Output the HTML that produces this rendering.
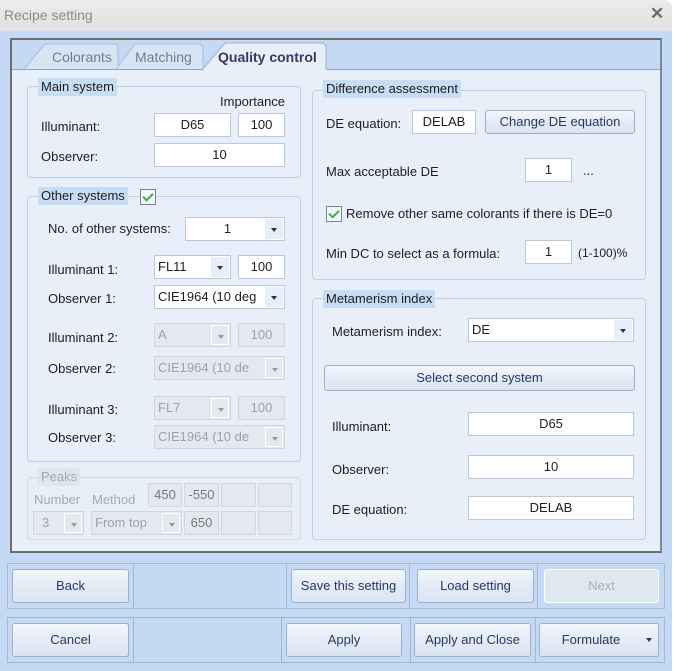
<!DOCTYPE html>
<html><head><style>
*{box-sizing:border-box;margin:0;padding:0}
body{width:675px;height:671px;overflow:hidden;background:#fff;font-family:"Liberation Sans",sans-serif;font-size:13px;color:#1e1e1e;position:relative}
.a{position:absolute}
.t{position:absolute;white-space:nowrap}
.g{position:absolute;border:1px solid #bcd0ea;border-radius:4px}
.gl{position:absolute;background:#c7dcf5;padding:0 3px;height:18px;line-height:18px;white-space:nowrap}
.in{position:absolute;background:#fff;border:1px solid #b7c9e2;text-align:center;line-height:22px;white-space:nowrap;overflow:hidden}
.cb{position:absolute;background:#fff;border:1px solid #b7c9e2;line-height:22px;padding-left:3px;white-space:nowrap;overflow:hidden}
.cb .ar{position:absolute;right:1px;top:1px;bottom:1px;width:18px;background:#e6eefa}
.cb .ar:after{content:"";position:absolute;left:6px;top:9px;border-left:3px solid transparent;border-right:3px solid transparent;border-top:4px solid #333}
.dis{background:#e4e9f0!important;color:#9aa3ad;border-color:#cfd6df}
.dis .ar{background:#e4e9f0;border:1px solid #fff}
.dis .ar:after{border-top-color:#999}
.bt{position:absolute;border:1px solid #9db0c9;border-radius:3px;background:linear-gradient(#f3f7fc,#e2eaf5 55%,#dbe5f2);color:#243a68;text-align:center;white-space:nowrap}
.cell{position:absolute;border:1px solid #a9b6c6}
.chk{position:absolute;width:16px;height:16px;border:1px solid #6f86a3;background:#f4f8fc}
.chk:after{content:"";position:absolute;left:4px;top:1px;width:4px;height:8px;border:solid #3bb03b;border-width:0 2px 2px 0;transform:rotate(45deg)}
</style></head><body>
<div class="a" style="left:0;top:0;width:672px;height:31px;background:linear-gradient(#ececec,#e1e1e1);border-radius:0 8px 0 0"></div>
<div class="t" style="left:4px;top:7px;color:#8a8a8a;font-size:14px">Recipe setting</div>
<div class="t" style="left:650px;top:4px;color:#6d6d6d;font-size:17px;font-weight:bold">✕</div>
<div class="a" style="left:0;top:31px;width:672px;height:640px;background:#c3d9f4"></div>
<div class="a" style="left:672px;top:0;width:3px;height:671px;background:#fff"></div>
<div class="a" style="left:10px;top:38px;width:652px;height:515px;border:2px solid #6d6d6d;border-right-color:#7a8a9c;background:#c3d9f4"></div>
<div class="a" style="left:12px;top:69px;width:648px;height:482px;background:#e8eff9;border-top:1px solid #8aa6cc"></div>
<!-- tabs -->
<svg class="a" style="left:20px;top:42px" width="310" height="29">
<path d="M4 27 L25 2 L96 2 L98 5 L98 27" fill="#d7e4f4" stroke="#a9bdd8"/>
<path d="M96 27 L115 2 L180 2 L183 5 L183 27" fill="#d7e4f4" stroke="#a9bdd8"/>
<path d="M182 28 L205 1 L303 1 L306 4 L306 28" fill="#e8eff9" stroke="#9ab4d6"/>
</svg>
<div class="t" style="left:52px;top:49px;color:#6c7f96;font-size:14px">Colorants</div>
<div class="t" style="left:135px;top:49px;color:#6c7f96;font-size:14px">Matching</div>
<div class="t" style="left:218px;top:49px;color:#2c3f60;font-size:14px;font-weight:bold">Quality control</div>
<!-- main system -->
<div class="g" style="left:27px;top:86px;width:274px;height:92px"></div>
<div class="gl" style="left:38px;top:78px">Main system</div>
<div class="t" style="left:220px;top:94px">Importance</div>
<div class="t" style="left:41px;top:119px">Illuminant:</div>
<div class="in" style="left:154px;top:113px;width:77px;height:24px">D65</div>
<div class="in" style="left:238px;top:113px;width:47px;height:24px">100</div>
<div class="t" style="left:41px;top:149px">Observer:</div>
<div class="in" style="left:154px;top:143px;width:131px;height:24px">10</div>
<!-- other systems -->
<div class="g" style="left:27px;top:196px;width:274px;height:266px"></div>
<div class="gl" style="left:38px;top:187px">Other systems</div>
<div class="chk" style="left:140px;top:189px"></div>
<div class="t" style="left:48px;top:221px">No. of other systems:</div>
<div class="cb" style="left:185px;top:217px;width:100px;height:24px;text-align:center;padding-right:18px">1<div class="ar"></div></div>
<div class="t" style="left:48px;top:262px">Illuminant 1:</div>
<div class="cb" style="left:154px;top:255px;width:77px;height:24px">FL11<div class="ar"></div></div>
<div class="in" style="left:238px;top:255px;width:47px;height:24px">100</div>
<div class="t" style="left:48px;top:291px">Observer 1:</div>
<div class="cb" style="left:154px;top:285px;width:131px;height:24px">CIE1964 (10 deg<div class="ar"></div></div>
<div class="t" style="left:48px;top:330px">Illuminant 2:</div>
<div class="cb dis" style="left:154px;top:323px;width:77px;height:24px">A<div class="ar"></div></div>
<div class="in dis" style="left:238px;top:323px;width:47px;height:24px">100</div>
<div class="t" style="left:48px;top:361px">Observer 2:</div>
<div class="cb dis" style="left:154px;top:356px;width:131px;height:24px">CIE1964 (10 de<div class="ar"></div></div>
<div class="t" style="left:48px;top:402px">Illuminant 3:</div>
<div class="cb dis" style="left:154px;top:396px;width:77px;height:24px">FL7<div class="ar"></div></div>
<div class="in dis" style="left:238px;top:396px;width:47px;height:24px">100</div>
<div class="t" style="left:48px;top:430px">Observer 3:</div>
<div class="cb dis" style="left:154px;top:425px;width:131px;height:24px">CIE1964 (10 de<div class="ar"></div></div>
<!-- peaks -->
<div class="g" style="left:27px;top:477px;width:274px;height:63px;border-color:#d3dbe6"></div>
<div class="gl" style="left:38px;top:468px;background:#dfe5ed;color:#a2abb5">Peaks</div>
<div class="t" style="left:34px;top:492px;color:#a2abb5">Number</div>
<div class="t" style="left:92px;top:492px;color:#a2abb5">Method</div>
<div class="in dis" style="left:148px;top:483px;width:34px;height:24px;color:#777">450</div>
<div class="in dis" style="left:184px;top:483px;width:35px;height:24px;color:#777">-550</div>
<div class="in dis" style="left:221px;top:483px;width:35px;height:24px"></div>
<div class="in dis" style="left:258px;top:483px;width:34px;height:24px"></div>
<div class="cb dis" style="left:33px;top:511px;width:51px;height:24px;padding-left:8px">3<div class="ar"></div></div>
<div class="cb dis" style="left:91px;top:511px;width:91px;height:24px">From top<div class="ar"></div></div>
<div class="in dis" style="left:184px;top:511px;width:35px;height:24px;color:#777">650</div>
<div class="in dis" style="left:221px;top:511px;width:35px;height:24px"></div>
<div class="in dis" style="left:258px;top:511px;width:34px;height:24px"></div>
<!-- difference assessment -->
<div class="g" style="left:312px;top:90px;width:334px;height:190px"></div>
<div class="gl" style="left:323px;top:80px">Difference assessment</div>
<div class="t" style="left:326px;top:116px">DE equation:</div>
<div class="in" style="left:412px;top:110px;width:64px;height:24px">DELAB</div>
<div class="bt" style="left:485px;top:110px;width:150px;height:24px;line-height:22px">Change DE equation</div>
<div class="t" style="left:326px;top:164px">Max acceptable DE</div>
<div class="in" style="left:525px;top:158px;width:47px;height:24px">1</div>
<div class="t" style="left:583px;top:163px">...</div>
<div class="chk" style="left:326px;top:206px"></div>
<div class="t" style="left:346px;top:206px">Remove other same colorants if there is DE=0</div>
<div class="t" style="left:326px;top:246px">Min DC to select as a formula:</div>
<div class="in" style="left:525px;top:240px;width:47px;height:24px">1</div>
<div class="t" style="left:578px;top:246px;font-size:12px">(1-100)%</div>
<!-- metamerism -->
<div class="g" style="left:312px;top:298px;width:334px;height:242px"></div>
<div class="gl" style="left:323px;top:290px">Metamerism index</div>
<div class="t" style="left:332px;top:324px">Metamerism index:</div>
<div class="cb" style="left:468px;top:318px;width:166px;height:24px">DE<div class="ar"></div></div>
<div class="bt" style="left:324px;top:365px;width:311px;height:26px;line-height:24px">Select second system</div>
<div class="t" style="left:332px;top:419px">Illuminant:</div>
<div class="in" style="left:468px;top:412px;width:166px;height:24px">D65</div>
<div class="t" style="left:332px;top:462px">Observer:</div>
<div class="in" style="left:468px;top:455px;width:166px;height:24px">10</div>
<div class="t" style="left:332px;top:502px">DE equation:</div>
<div class="in" style="left:468px;top:496px;width:166px;height:24px">DELAB</div>
<!-- bottom rows -->
<div class="cell" style="left:7px;top:563px;width:127px;height:46px"></div>
<div class="cell" style="left:133px;top:563px;width:154px;height:46px;border-left:0"></div>
<div class="cell" style="left:286px;top:563px;width:124px;height:46px"></div>
<div class="cell" style="left:409px;top:563px;width:129px;height:46px"></div>
<div class="cell" style="left:537px;top:563px;width:128px;height:46px"></div>
<div class="bt" style="left:12px;top:569px;width:117px;height:34px;line-height:32px">Back</div>
<div class="bt" style="left:291px;top:569px;width:115px;height:34px;line-height:32px">Save this setting</div>
<div class="bt" style="left:417px;top:569px;width:117px;height:34px;line-height:32px">Load setting</div>
<div class="bt" style="left:544px;top:569px;width:115px;height:34px;line-height:32px;background:#dfe7f1;border-color:#fff;color:#a8b1bc">Next</div>
<div class="cell" style="left:7px;top:617px;width:127px;height:46px"></div>
<div class="cell" style="left:133px;top:617px;width:149px;height:46px;border-left:0"></div>
<div class="cell" style="left:281px;top:617px;width:130px;height:46px"></div>
<div class="cell" style="left:410px;top:617px;width:126px;height:46px"></div>
<div class="cell" style="left:535px;top:617px;width:130px;height:46px"></div>
<div class="bt" style="left:12px;top:623px;width:117px;height:34px;line-height:32px">Cancel</div>
<div class="bt" style="left:286px;top:623px;width:116px;height:34px;line-height:32px">Apply</div>
<div class="bt" style="left:414px;top:623px;width:117px;height:34px;line-height:32px">Apply and Close</div>
<div class="bt" style="left:539px;top:623px;width:120px;height:34px;line-height:32px;padding-right:16px">Formulate<span style="position:absolute;right:6px;top:14px;border-left:3px solid transparent;border-right:3px solid transparent;border-top:4px solid #243a68"></span></div>
</body></html>
